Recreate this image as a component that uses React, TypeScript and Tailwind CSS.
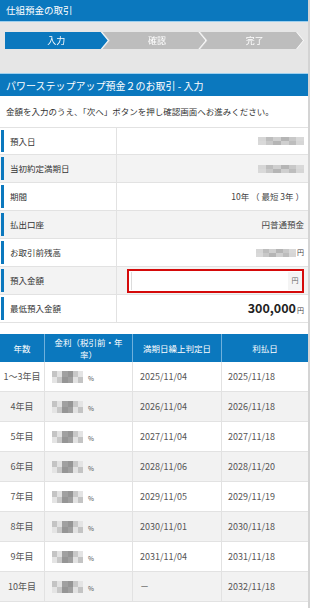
import React from 'react';

const BLUE = 'bg-[#0b78be]';

function Mosaic({ w, h, cols }: { w: number; h: number; cols: string[] }) {
  return (
    <span className="inline-flex flex-col" style={{ width: w, height: h }}>
      <span className="flex flex-1">
        {cols.map((c, i) => (
          <span key={i} className="flex-1" style={{ background: c }} />
        ))}
      </span>
      <span className="flex flex-1">
        {[...cols].reverse().map((c, i) => (
          <span key={i} className="flex-1" style={{ background: c }} />
        ))}
      </span>
    </span>
  );
}

const grayA = ['#d6d6d6', '#bdbdbd', '#cfcfcf', '#b5b5b5', '#c8c8c8', '#d9d9d9'];
const grayB = ['#c4c4c4', '#e2e2e2', '#a0a0a0', '#959595', '#c8c8c8', '#e4e4e4'];

function Steps() {
  const steps = ['入力', '確認', '完了'];
  return (
    <div className="flex h-[17px]">
      {steps.map((s, i) => (
        <div
          key={s}
          className={`flex-1 h-full [filter:drop-shadow(1px_0_0_#fafafa)] ${i === 0 ? '' : '-ml-[5px]'}`}
        >
          <div
            className={`h-full flex items-center justify-center text-[9px] text-white ${
              i === 0
                ? `${BLUE} [clip-path:polygon(0_0,calc(100%-7px)_0,100%_50%,calc(100%-7px)_100%,0_100%)]`
                : 'bg-[#bdbdbd] [clip-path:polygon(0_0,calc(100%-7px)_0,100%_50%,calc(100%-7px)_100%,0_100%,7px_50%)]'
            }`}
          >
            <span className={i === 0 ? '' : 'pl-[6px]'}>{s}</span>
          </div>
        </div>
      ))}
    </div>
  );
}

function InfoRow({
  label,
  gray,
  first,
  children,
}: {
  label: string;
  gray?: boolean;
  first?: boolean;
  children: React.ReactNode;
}) {
  return (
    <div
      className={`flex h-[28px] border-b border-[#e2e2e2] ${first ? 'border-t' : ''} ${
        gray ? 'bg-[#f3f3f3]' : 'bg-white'
      }`}
    >
      <div className="w-[3px] my-[2px] ml-[1px] bg-[#0b78be]" />
      <div className="w-[113px] flex items-center pl-[6px] text-[8.5px] text-[#333] border-r border-[#e2e2e2]">
        {label}
      </div>
      <div className="flex-1 flex items-center justify-end pr-[4px] text-[8.5px] text-[#444]">
        {children}
      </div>
    </div>
  );
}

const rows = [
  ['1～3年目', '2025/11/04', '2025/11/18'],
  ['4年目', '2026/11/04', '2026/11/18'],
  ['5年目', '2027/11/04', '2027/11/18'],
  ['6年目', '2028/11/06', '2028/11/20'],
  ['7年目', '2029/11/05', '2029/11/19'],
  ['8年目', '2030/11/01', '2030/11/18'],
  ['9年目', '2031/11/04', '2031/11/18'],
  ['10年目', '－', '2032/11/18'],
];

export default function App() {
  return (
    <div className="w-[310px] h-[608px] overflow-hidden bg-white border-r-2 border-[#d4d4d4] [font-family:'Noto_Sans_CJK_JP',sans-serif]">
      <div className={`${BLUE} h-[22px] flex items-center px-[6px] text-[9.5px] text-white border-b border-[#9fd0ee]`}>
        仕組預金の取引
      </div>
      <div className="h-[51px] bg-[#e6e6e6] pt-[10px] px-[5px]">
        <Steps />
      </div>
      <div className={`${BLUE} h-[23px] flex items-center px-[6px] text-[10px] text-white border-t border-[#9fd0ee]`}>
        パワーステップアップ預金２のお取引 - 入力
      </div>
      <div className="h-[31px] flex items-center pl-[6px] text-[8.5px] text-[#333]">
        金額を入力のうえ、「次へ」ボタンを押し確認画面へお進みください。
      </div>

      <InfoRow label="預入日" first>
        <Mosaic w={46} h={8} cols={grayA} />
      </InfoRow>
      <InfoRow label="当初約定満期日" gray>
        <Mosaic w={46} h={8} cols={grayA} />
      </InfoRow>
      <InfoRow label="期間">10年 （ 最短 3年 ）</InfoRow>
      <InfoRow label="払出口座" gray>
        円普通預金
      </InfoRow>
      <InfoRow label="お取引前残高">
        <Mosaic w={40} h={8} cols={grayA} />
        <span className="text-[7px] ml-[1px]">円</span>
      </InfoRow>
      <InfoRow label="預入金額" gray>
        <div className="w-[177px] h-[24px] border-2 border-[#d50a0a] flex bg-white">
          <div className="flex-1 ml-[2px] my-[1px] border-l border-[#dcdcdc] bg-white" />
          <div className="w-[14px] my-[1px] bg-[#f4f4f4] flex items-center justify-center text-[7px] text-[#666]">
            円
          </div>
        </div>
      </InfoRow>
      <InfoRow label="最低預入金額">
        <span className="text-[12.5px] font-bold text-[#222]">300,000</span>
        <span className="text-[7px] ml-[1px] mt-[3px]">円</span>
      </InfoRow>

      <div className="h-[11px]" />

      <div className={`${BLUE} grid grid-cols-[45px_88px_89px_1fr] h-[28px] text-white text-[8.5px]`}>
        <div className="flex items-center justify-center border-r border-[#6fb0dc]">年数</div>
        <div className="flex items-center justify-center text-center px-[8px] leading-[12px] border-r border-[#6fb0dc]">
          金利（税引前・年率）
        </div>
        <div className="flex items-center justify-center border-r border-[#6fb0dc]">満期日繰上判定日</div>
        <div className="flex items-center justify-center">利払日</div>
      </div>

      {rows.map((r, i) => (
        <div
          key={r[0]}
          className={`grid grid-cols-[45px_88px_89px_1fr] h-[30px] border-b border-[#e2e2e2] text-[9px] text-[#555] ${
            i % 2 ? 'bg-[#f2f2f2]' : 'bg-white'
          }`}
        >
          <div className="flex items-center justify-center border-r border-[#e2e2e2]">{r[0]}</div>
          <div className="flex items-center pl-[7px] border-r border-[#e2e2e2]">
            <Mosaic w={31} h={12} cols={grayB} />
            <span className="text-[6.5px] ml-[5px] mt-[4px]">%</span>
          </div>
          <div className="flex items-center pl-[7px] border-r border-[#e2e2e2]">{r[1]}</div>
          <div className="flex items-center pl-[6px]">{r[2]}</div>
        </div>
      ))}
    </div>
  );
}
